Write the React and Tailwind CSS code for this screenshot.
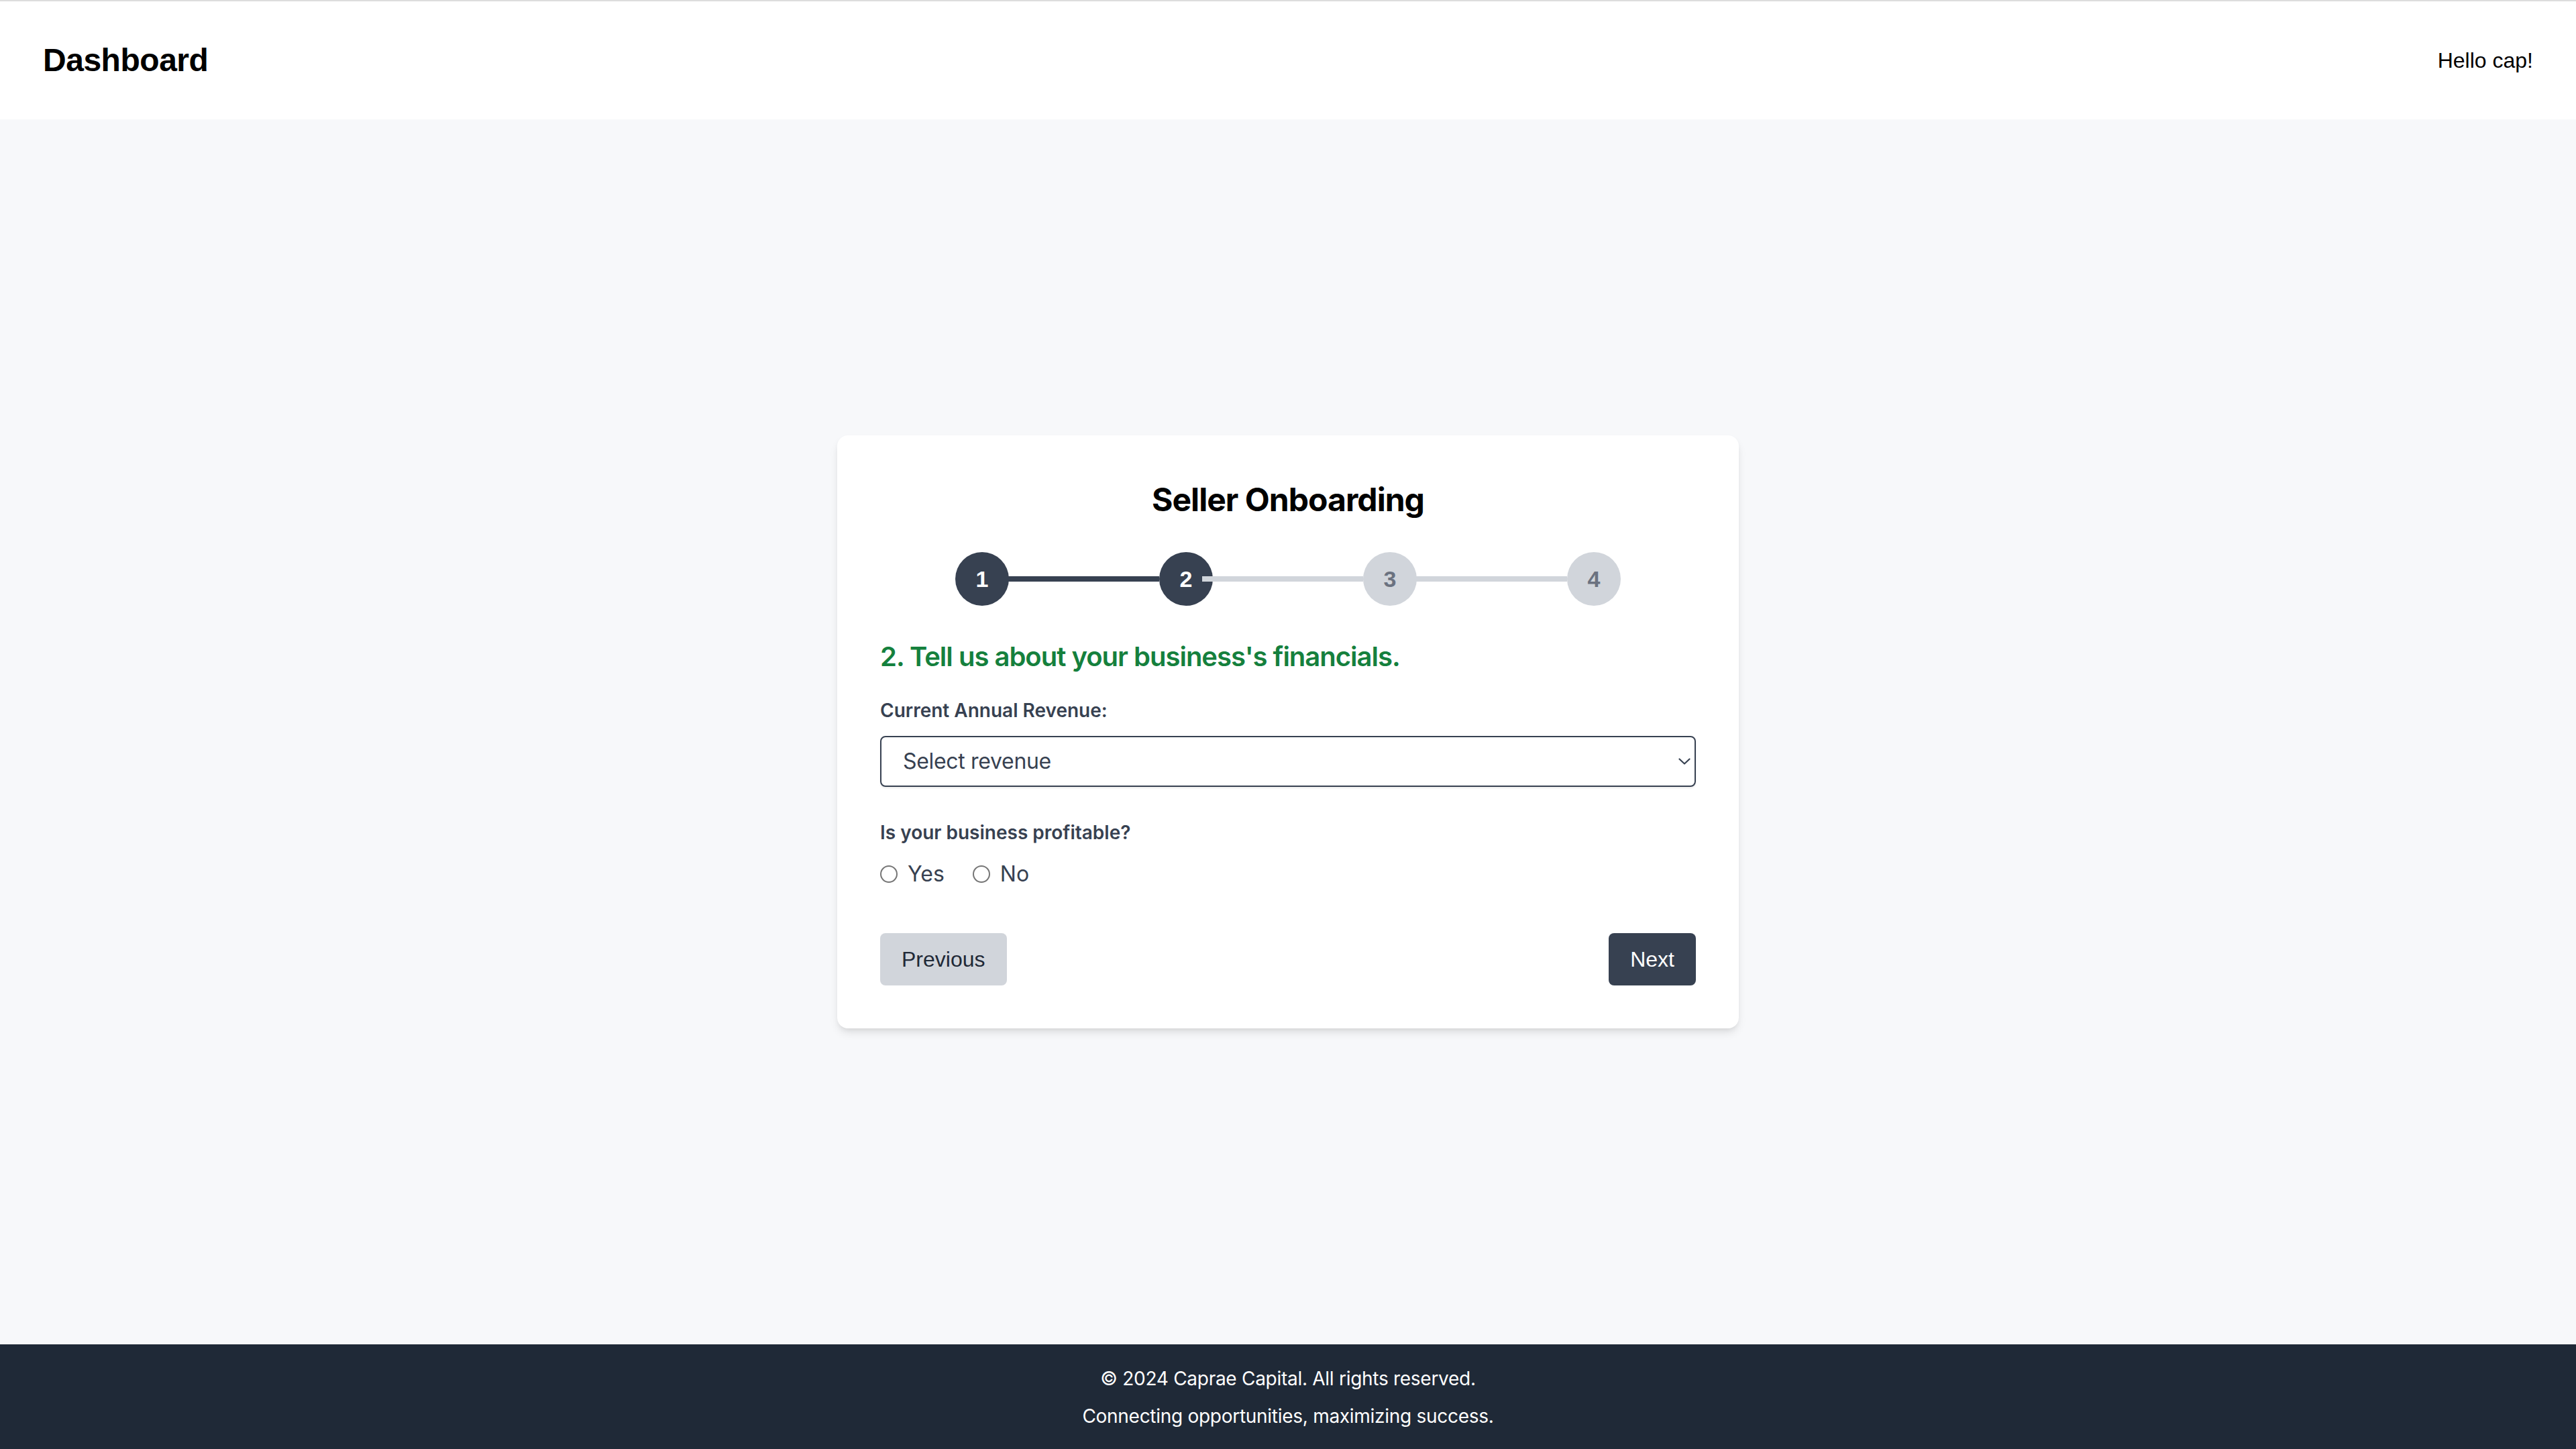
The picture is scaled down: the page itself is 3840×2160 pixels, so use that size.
import React from "react";

function Circle({ n, active }) {
  return (
    <div
      className={
        "w-[80px] h-[80px] shrink-0 rounded-full flex items-center justify-center font-['Liberation_Sans',Arial,sans-serif] font-bold text-[34px] leading-none " +
        (active ? "bg-[#374151] text-white" : "bg-[#d1d5db] text-[#6b7280]")
      }
    >
      {n}
    </div>
  );
}

function Line({ active }) {
  return (
    <div
      className={
        "h-[8px] w-[240px] -ml-[16px] shrink-0 " +
        (active ? "bg-[#374151]" : "bg-[#d1d5db]")
      }
    />
  );
}

export default function App() {
  return (
    <div className="min-h-screen flex flex-col bg-[#f7f8fa]">
      <header className="h-[178px] border-t-2 border-[#dddddd] bg-white px-[64px] flex items-center justify-between font-['Liberation_Sans',Arial,sans-serif] text-black">
        <h1 className="text-[48px] leading-[64px] font-bold tracking-[-0.01em]">Dashboard</h1>
        <span className="text-[32px] leading-[48px]">Hello cap!</span>
      </header>

      <main className="flex-1 flex items-center justify-center">
        <div className="w-[1344px] bg-white rounded-[16px] p-[64px] shadow-[0_8px_14px_-2px_rgba(0,0,0,0.1),0_4px_8px_-4px_rgba(0,0,0,0.1)] font-['Inter',sans-serif]">
          <h2 className="text-[48px] leading-[64px] font-bold text-center text-black tracking-[-0.02em] mb-[46px]">
            Seller Onboarding
          </h2>

          <div className="h-[80px] flex items-center justify-center mb-[48px]">
            <Circle n="1" active />
            <Line active />
            <Circle n="2" active />
            <Line />
            <Circle n="3" />
            <Line />
            <Circle n="4" />
          </div>

          <h3 className="text-[40px] leading-[56px] font-semibold text-[#15803d] tracking-[-0.025em] mb-[32px]">
            2. Tell us about your business's financials.
          </h3>

          <label className="block text-[28px] leading-[40px] font-semibold text-[#374151] mb-[18px]">
            Current Annual Revenue:
          </label>
          <div className="relative mb-[48px]">
            <select className="appearance-none w-full h-[76px] border-2 border-[#374151] rounded-[8px] bg-white pl-[32px] pr-[48px] text-[32px] tracking-[-0.01em] text-[#374151] font-['Inter',sans-serif] shadow-[0_2px_3px_rgba(0,0,0,0.08)] outline-none">
              <option>Select revenue</option>
            </select>
            <svg
              className="absolute right-[8px] top-1/2 -translate-y-1/2 w-[18px] h-[12px] pointer-events-none"
              viewBox="0 0 18 12"
              fill="none"
            >
              <path d="M1.5 2.5 L9 9.5 L16.5 2.5" stroke="#374151" strokeWidth="2.2" strokeLinecap="round" strokeLinejoin="round" />
            </svg>
          </div>

          <p className="text-[28px] leading-[40px] font-semibold text-[#374151] mb-[18px]">
            Is your business profitable?
          </p>
          <div className="h-[48px] flex items-center gap-[42px] mb-[64px] text-[32px] text-[#374151]">
            <label className="flex items-center gap-[15px]">
              <input
                type="radio"
                name="profit"
                className="appearance-none w-[26px] h-[26px] rounded-full border-2 border-[#767676] bg-white"
              />
              <span>Yes</span>
            </label>
            <label className="flex items-center gap-[15px]">
              <input
                type="radio"
                name="profit"
                className="appearance-none w-[26px] h-[26px] rounded-full border-2 border-[#767676] bg-white"
              />
              <span>No</span>
            </label>
          </div>

          <div className="flex items-center justify-between font-['Liberation_Sans',Arial,sans-serif]">
            <button className="h-[78px] px-[32px] rounded-[8px] bg-[#d1d5db] text-[#1f2937] text-[32px]">
              Previous
            </button>
            <button className="h-[78px] px-[32px] rounded-[8px] bg-[#374151] text-white text-[32px]">
              Next
            </button>
          </div>
        </div>
      </main>

      <footer className="h-[156px] bg-[#1f2937] text-white text-center font-['Inter',sans-serif] text-[28px] leading-[40px] tracking-[-0.01em] pt-[31px]">
        <p>© 2024 Caprae Capital. All rights reserved.</p>
        <p className="mt-[16px]">Connecting opportunities, maximizing success.</p>
      </footer>
    </div>
  );
}
